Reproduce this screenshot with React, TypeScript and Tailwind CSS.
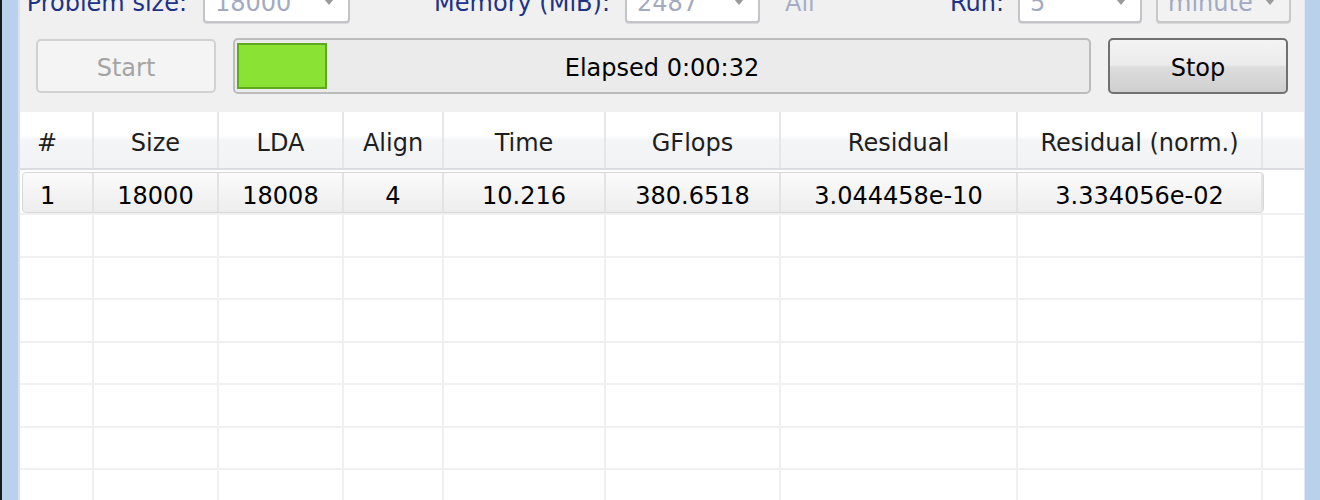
import { ReactNode } from "react";

const font = { fontFamily: '"DejaVu Sans", "Liberation Sans", sans-serif' };

function Combo({ value, width, disabled }: { value: string; width: string; disabled?: boolean }) {
  return (
    <div
      className={`${width} h-[44px] shrink-0 flex items-center justify-between pl-[10px] pr-[14px] rounded-[4px] border-2 ${
        disabled ? "bg-[#f2f2f2] border-[#c8c8c8]" : "bg-white border-[#c2c4c8]"
      } shadow-[0_1px_0_#d8d8d8]`}
    >
      <span className="text-[#a2aac2] pt-[3px]">{value}</span>
      <svg width="10" height="6" viewBox="0 0 10 6" className="mt-[2px]">
        <path d="M0 0 L10 0 L5 6 Z" fill="#9a9a9a" />
      </svg>
    </div>
  );
}

const cols = [
  { label: "#", w: "w-[74px]", left: true },
  { label: "Size", w: "w-[125px]" },
  { label: "LDA", w: "w-[125px]" },
  { label: "Align", w: "w-[100px]" },
  { label: "Time", w: "w-[162px]" },
  { label: "GFlops", w: "w-[175px]" },
  { label: "Residual", w: "w-[237px]" },
  { label: "Residual (norm.)", w: "w-[245px]" },
];

const row = ["1", "18000", "18008", "4", "10.216", "380.6518", "3.044458e-10", "3.334056e-02"];

function Cell({ w, left, children, line }: { w: string; left?: boolean; children?: ReactNode; line: string }) {
  return (
    <div
      className={`${w} shrink-0 h-full flex items-center pt-[6px] border-r-2 ${line} ${
        left ? "justify-start pl-[17px]" : "justify-center"
      }`}
    >
      {children}
    </div>
  );
}

export default function App() {
  return (
    <div className="w-[1320px] h-[500px] overflow-hidden flex bg-[#f0f0f0] text-[24px] leading-none" style={font}>
      {/* left window frame */}
      <div className="w-[2px] bg-[#1b1b1b] shrink-0" />
      <div className="w-[16px] bg-[#b9d1ea] shrink-0" />
      <div className="w-[2px] bg-[#d6e3f2] shrink-0" />

      <div className="w-[1284px] shrink-0 flex flex-col">
        {/* settings row, cut by the top edge */}
        <div className="flex items-center h-[44px] -mt-[21px]">
          <div className="w-[183px] shrink-0 text-right pr-[16px] pt-[3px] text-[#1e3287]">Problem size:</div>
          <Combo value="18000" width="w-[147px]" />
          <div className="w-[275px] shrink-0 text-right pr-[15px] pt-[3px] text-[#1e3287]">Memory (MiB):</div>
          <Combo value="2487" width="w-[135px]" />
          <div className="w-[258px] shrink-0 flex justify-between pl-[25px] pr-[14px] pt-[3px]">
            <span className="text-[#a6aec6]">All</span>
            <span className="text-[#1e3287]">Run:</span>
          </div>
          <Combo value="5" width="w-[124px]" />
          <div className="w-[14px] shrink-0" />
          <Combo value="minute" width="w-[135px]" disabled />
        </div>

        {/* action row */}
        <div className="flex items-center mt-[15px] h-[56px] px-[16px] gap-[17px]">
          <div className="w-[180px] h-[54px] shrink-0 rounded-[5px] border-2 border-[#cfd1d3] bg-[#f4f4f4] flex items-center justify-center pt-[4px] text-[#a4a4a4]">
            Start
          </div>
          <div className="relative flex-1 h-[56px] rounded-[5px] border-2 border-[#bcbcbc] bg-[#ebebeb] flex items-center justify-center pt-[4px]">
            <div className="absolute left-[2px] top-[3px] w-[90px] h-[46px] bg-[#89e234] border-2 border-[#5fa81f]" />
            <span className="text-black">Elapsed 0:00:32</span>
          </div>
          <div className="w-[180px] h-[56px] shrink-0 rounded-[5px] border-2 border-[#707070] bg-[linear-gradient(#f3f3f3_0%,#ebebeb_48%,#dddddd_52%,#cfcfcf_100%)] flex items-center justify-center pt-[4px] text-black">
            Stop
          </div>
        </div>

        {/* results table */}
        <div className="mt-[18px] flex-1 bg-white flex flex-col">
          <div className="h-[58px] shrink-0 flex border-b-2 border-[#dadcdf] bg-[linear-gradient(#ffffff_0%,#ffffff_42%,#f4f5f7_50%,#f2f3f5_100%)] text-[#1e1e1e]">
            {cols.map((c) => (
              <Cell key={c.label} w={c.w} left={c.left} line="border-[#e4e6e9]">
                {c.label}
              </Cell>
            ))}
            <div className="flex-1" />
          </div>

          <div className="h-[43px] shrink-0 flex pt-[2px] pl-[2px]">
            <div className="flex h-full rounded-[4px] border border-[#d8d8d8] bg-[linear-gradient(#fbfbfb,#ededed)] text-black">
              {row.map((v, i) => (
                <Cell key={i} w={i === 0 ? "w-[71px]" : cols[i].w} left={i === 0} line="border-[#e3e3e3]">
                  {v}
                </Cell>
              ))}
            </div>
          </div>

          {Array.from({ length: 7 }).map((_, r) => (
            <div key={r} className="h-[42.5px] shrink-0 flex border-t-2 border-[#f0f0f0]">
              {cols.map((c) => (
                <Cell key={c.label} w={c.w} line="border-[#f0f0f0]" />
              ))}
              <div className="flex-1" />
            </div>
          ))}
        </div>
      </div>

      {/* right window frame */}
      <div className="w-px bg-[#dfe8f3] shrink-0" />
      <div className="flex-1 bg-[#b9d1ea]" />
    </div>
  );
}
